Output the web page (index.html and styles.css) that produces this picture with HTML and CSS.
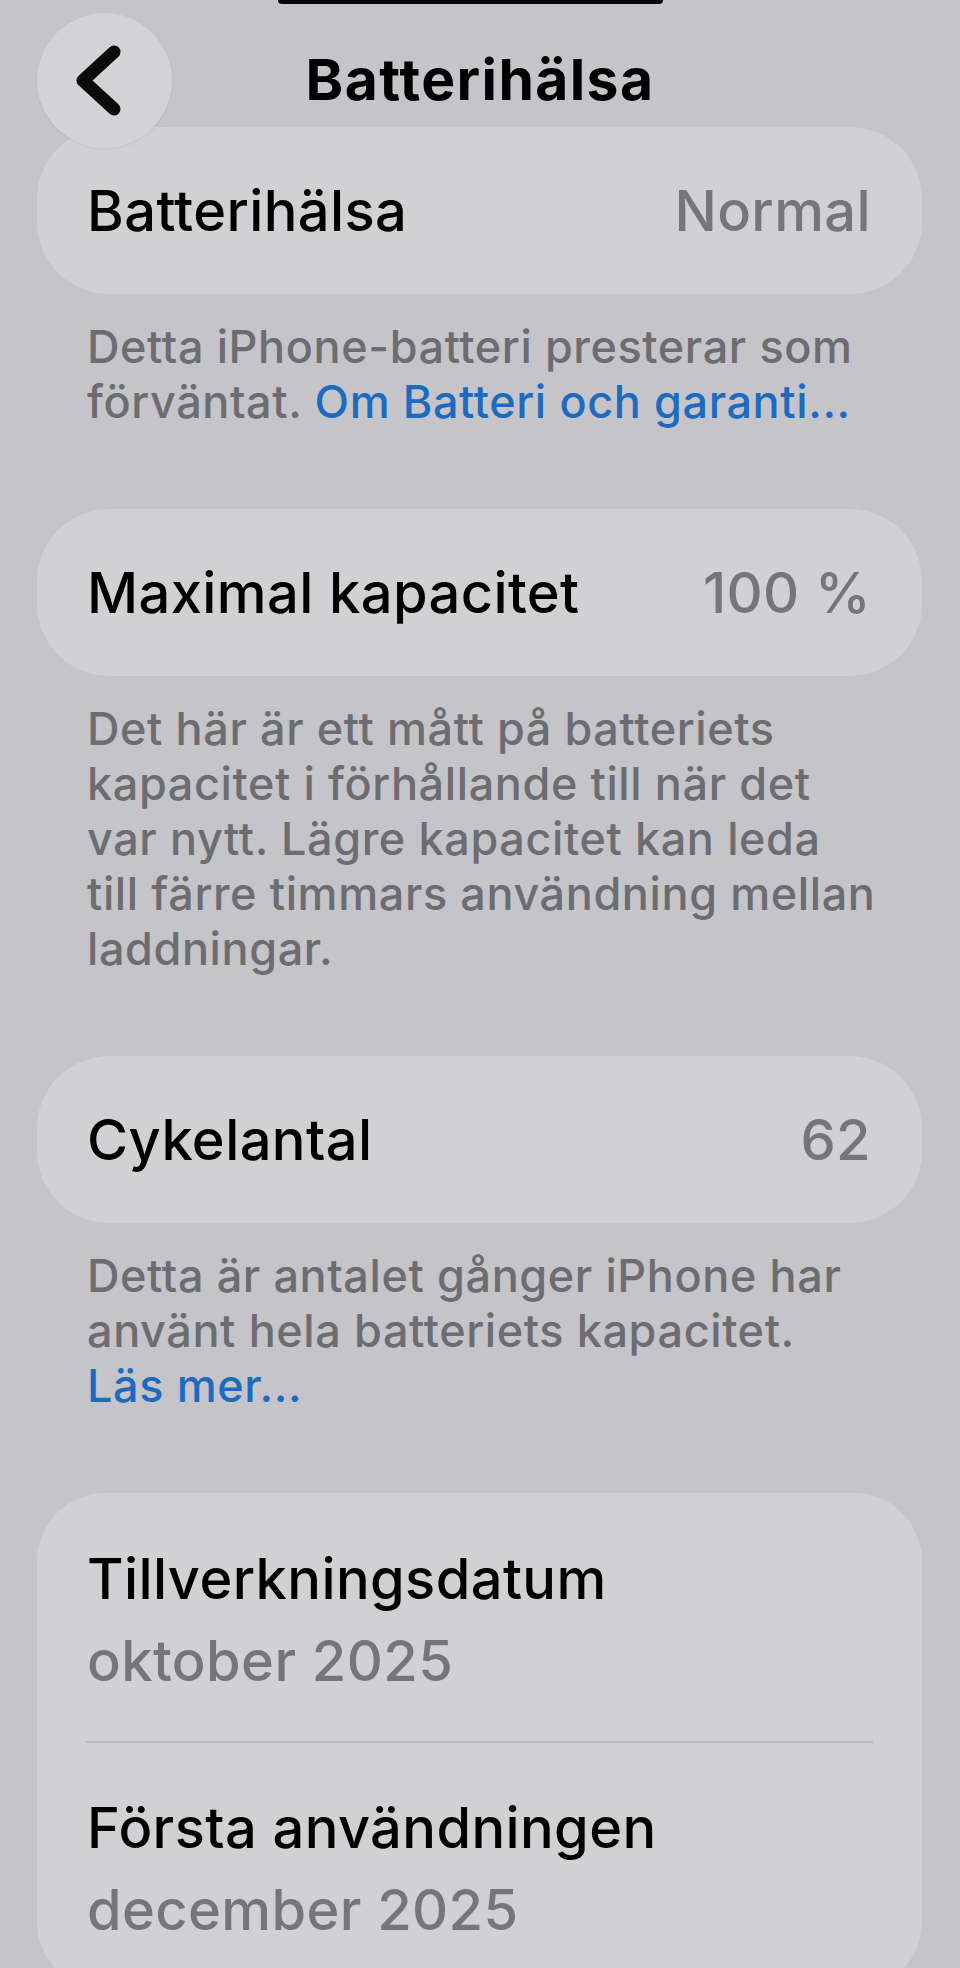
FILE: index.html
```html
<!DOCTYPE html>
<html>

	<head>
		<meta charset="UTF-8">
		<title>Batterihälsa</title>
		<link rel="stylesheet" href="styles.css">
	</head>

	<body>
		<div class="island"></div>

		<header class="nav">
			<a class="back" href="javascript:;">
				<svg width="135" height="135" viewBox="0 0 135 135">
					<path d="M77 39 L46 67.5 L77 96" fill="none" stroke="#0b0b0c" stroke-width="13" stroke-linecap="round" stroke-linejoin="round"/>
				</svg>
			</a>
			<h1 class="nav-title">Batterihälsa</h1>
			<span></span>
		</header>

		<main class="list">
			<section class="group">
				<div class="cell">
					<span class="cell-label">Batterihälsa</span>
					<span class="cell-value">Normal</span>
				</div>
			</section>
			<p class="footer">Detta iPhone-batteri presterar som<br>förväntat. <a href="javascript:;">Om Batteri och garanti...</a></p>

			<section class="group">
				<div class="cell">
					<span class="cell-label">Maximal kapacitet</span>
					<span class="cell-value">100 %</span>
				</div>
			</section>
			<p class="footer">Det här är ett mått på batteriets<br>kapacitet i förhållande till när det<br>var nytt. Lägre kapacitet kan leda<br>till färre timmars användning mellan<br>laddningar.</p>

			<section class="group">
				<div class="cell">
					<span class="cell-label">Cykelantal</span>
					<span class="cell-value">62</span>
				</div>
			</section>
			<p class="footer">Detta är antalet gånger iPhone har<br>använt hela batteriets kapacitet.<br><a href="javascript:;">Läs mer...</a></p>

			<section class="group group-stack">
				<div class="info">
					<div class="cell-label">Tillverkningsdatum</div>
					<div class="info-value">oktober 2025</div>
				</div>
				<div class="info">
					<div class="cell-label">Första användningen</div>
					<div class="info-value">december 2025</div>
				</div>
			</section>
		</main>
	</body>

</html>
```

FILE: styles.css
```css
* {
	margin: 0;
	padding: 0;
	box-sizing: border-box;
}
body {
	height: 1968px;
	overflow: hidden;
	background: #c4c4c9;
	font-family: Inter, "Noto Sans", sans-serif;
	color: #000;
}
a {
	text-decoration: none;
}

/* top of the dynamic island */
.island {
	position: absolute;
	top: 0;
	left: 278px;
	width: 385px;
	height: 4px;
	background: #050505;
	border-radius: 0 0 10px 10px;
}

.nav {
	position: relative;
	z-index: 1;
	display: grid;
	grid-template-columns: 135px 1fr 135px;
	align-items: center;
	padding: 13px 37px 0;
}
.back {
	display: block;
	width: 135px;
	height: 135px;
	border-radius: 50%;
	background: #d3d3d6;
	box-shadow: 0 1px 3px rgba(0, 0, 0, 0.06);
}
.back svg {
	display: block;
}
.nav-title {
	text-align: center;
	font-size: 57px;
	font-weight: 700;
	line-height: 1.21;
	letter-spacing: 1.4px;
}

.list {
	margin-top: -21px;
	padding: 0 38px 0 37px;
}
.group {
	background: #d1d1d3;
	border-radius: 72px;
}
.cell {
	display: flex;
	justify-content: space-between;
	align-items: center;
	height: 167px;
	padding: 0 51px 0 50px;
}
.cell-label {
	font-size: 56px;
	font-weight: 500;
	line-height: 66px;
	letter-spacing: 0.4px;
}
.cell-value {
	font-size: 56px;
	font-weight: 500;
	line-height: 66px;
	letter-spacing: 0.4px;
	color: #76767a;
}

.footer {
	margin: 25px 0 80px;
	padding: 0 20px 0 50px;
	font-size: 45px;
	font-weight: 500;
	line-height: 55px;
	letter-spacing: 0.6px;
	color: #6c6c71;
}
.footer a {
	color: #1b6cc0;
}

.group-stack {
	border-radius: 68px;
	padding: 0 49px 0 48px;
}
.info {
	padding: 53px 2px 47px;
}
.info + .info {
	border-top: 2px solid #bcbcc0;
	padding-top: 52px;
}
.info-value {
	margin-top: 16px;
	font-size: 56px;
	font-weight: 500;
	line-height: 66px;
	letter-spacing: 0.4px;
	color: #76767a;
}
```
